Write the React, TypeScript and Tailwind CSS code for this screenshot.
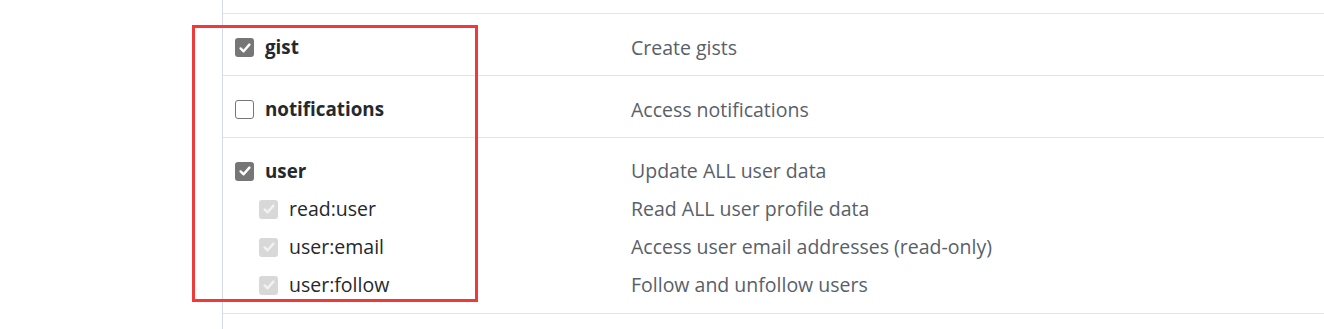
import React from "react";

type BoxKind = "checked" | "unchecked" | "disabled";

function Box({ kind }: { kind: BoxKind }) {
  if (kind === "unchecked") {
    return (
      <span className="inline-block w-[19px] h-[19px] shrink-0 rounded-[3px] border-[1.5px] border-[#767676] bg-white" />
    );
  }
  const bg = kind === "checked" ? "bg-[#767676]" : "bg-[#d8d8d8]";
  const stroke = kind === "checked" ? "#ffffff" : "#f2f2f2";
  return (
    <span className={`inline-flex w-[19px] h-[19px] shrink-0 items-center justify-center rounded-[3px] ${bg}`}>
      <svg width="14" height="14" viewBox="0 0 14 14" fill="none">
        <path d="M2.6 7.4 L5.6 10.3 L11.4 3.6" stroke={stroke} strokeWidth="2.4" strokeLinecap="round" strokeLinejoin="round" />
      </svg>
    </span>
  );
}

function Line({
  kind,
  label,
  desc,
  bold,
  sub,
}: {
  kind: BoxKind;
  label: string;
  desc: string;
  bold?: boolean;
  sub?: boolean;
}) {
  return (
    <div className="flex h-[38px] items-center">
      <div className={`flex w-[408px] items-center ${sub ? "pl-[36px]" : "pl-[12px]"}`}>
        <Box kind={kind} />
        <span
          className={
            bold
              ? "ml-[11px] text-[18.8px] font-bold leading-none text-[#24292e]"
              : "ml-[11px] text-[19.5px] leading-none text-[#24292e]"
          }
        >
          {label}
        </span>
      </div>
      <div className="text-[19.5px] leading-none text-[#586069]">{desc}</div>
    </div>
  );
}

export default function App() {
  return (
    <div
      className="relative h-[329px] w-[1324px] overflow-hidden bg-white"
      style={{ fontFamily: '"Open Sans", "Noto Sans", sans-serif' }}
    >
      <div className="flex h-full">
        <div className="w-[222px] shrink-0" />
        <div className="flex flex-1 flex-col border-l border-[#d4dbe3]">
          <div className="h-[13px]" />
          <div className="flex h-[62px] items-center border-t border-[#e1e4e8] pt-[6px]">
            <div className="w-full">
              <Line kind="checked" label="gist" desc="Create gists" bold />
            </div>
          </div>
          <div className="flex h-[62px] items-center border-t border-[#e1e4e8] pt-[6px]">
            <div className="w-full">
              <Line kind="unchecked" label="notifications" desc="Access notifications" bold />
            </div>
          </div>
          <div className="flex h-[176px] flex-col border-t border-[#e1e4e8] pt-[14px]">
            <Line kind="checked" label="user" desc="Update ALL user data" bold />
            <Line kind="disabled" label="read:user" desc="Read ALL user profile data" sub />
            <Line kind="disabled" label="user:email" desc="Access user email addresses (read-only)" sub />
            <Line kind="disabled" label="user:follow" desc="Follow and unfollow users" sub />
          </div>
          <div className="flex-1 border-t border-[#e1e4e8]" />
        </div>
      </div>
      <div className="pointer-events-none absolute left-[192px] top-[25px] h-[277px] w-[286px] border-[3px] border-[#f03a3a]" />
    </div>
  );
}
